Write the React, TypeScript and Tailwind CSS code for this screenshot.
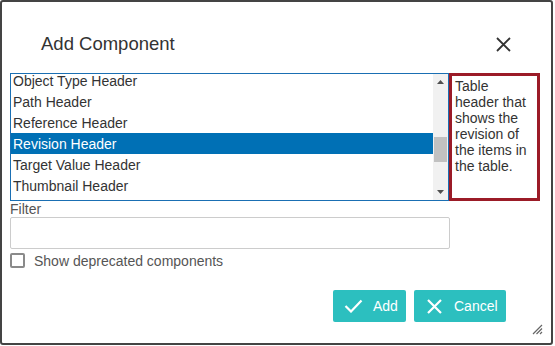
import React from "react";

const items = [
  "Object Type Header",
  "Path Header",
  "Reference Header",
  "Revision Header",
  "Target Value Header",
  "Thumbnail Header",
];

export default function App() {
  return (
    <div className="w-[555px] h-[346px] bg-white" style={{ fontFamily: '"Liberation Sans", Arial, sans-serif' }}>
      <div className="relative w-[553px] h-[345px] border-2 border-[#444444] rounded-[3px] bg-white flex flex-col">
        {/* Header */}
        <div className="flex items-center justify-between h-[30px] mt-[27px] mb-[14px] pl-[39px] pr-[40px]">
          <div className="text-[18.5px] text-[#333333] leading-none">Add Component</div>
          <svg width="15" height="15" viewBox="0 0 15 15">
            <path d="M1 1 L14 14 M14 1 L1 14" stroke="#333333" strokeWidth="1.8" fill="none" />
          </svg>
        </div>

        {/* Body */}
        <div className="px-[8px] flex flex-col">
          <div className="flex">
            <div className="w-[439px] h-[128px] border border-[#1a6fb3] flex">
              <div className="flex-1 overflow-hidden">
                <div className="-mt-[4px]">
                  {items.map((it) => (
                    <div
                      key={it}
                      className={
                        "h-[21px] leading-[20px] pt-[1px] pl-[2px] text-[14px] whitespace-nowrap " +
                        (it === "Revision Header" ? "bg-[#0070b5] text-white" : "text-[#333333]")
                      }
                    >
                      {it}
                    </div>
                  ))}
                </div>
              </div>
              <div className="w-[15px] h-full bg-[#f1f1f1] flex flex-col">
                <div className="h-[16px] flex items-center justify-center">
                  <svg width="7" height="4" viewBox="0 0 7 4">
                    <path d="M0 4 L3.5 0 L7 4 Z" fill="#505050" />
                  </svg>
                </div>
                <div className="flex-1 px-[1px]">
                  <div className="mt-[47px] h-[25px] bg-[#c1c1c1]" />
                </div>
                <div className="h-[16px] flex items-center justify-center">
                  <svg width="7" height="4" viewBox="0 0 7 4">
                    <path d="M0 0 L3.5 4 L7 0 Z" fill="#505050" />
                  </svg>
                </div>
              </div>
            </div>
            <div className="w-[91px] h-[128px] border-[3px] border-[#9b1b27] pl-[3px] pr-[2px] pt-[2px] text-[14px] leading-[16px] text-[#333333]">
              Table header that shows the revision of the items in the table.
            </div>
          </div>

          <div className="text-[14px] leading-[16px] text-[#555555]">Filter</div>
          <div className="w-[440px] h-[32px] border border-[#cccccc] rounded-[2px]" />

          <div className="flex items-center h-[17px] mt-[3px]">
            <div className="w-[15px] h-[15px] border-2 border-[#8a8a8a] rounded-[2px]" />
            <div className="ml-[9px] text-[14px] text-[#555555] leading-[16px]">Show deprecated components</div>
          </div>
        </div>

        {/* Buttons */}
        <div className="flex justify-end gap-[8px] pr-[45px] mt-[21px]">
          <div className="w-[73px] h-[32px] bg-[#2cbfbf] rounded-[2px] flex items-center pl-[11px] text-white text-[14px]">
            <svg width="19" height="14" viewBox="0 0 19 14">
              <path d="M1.5 7 L7 12.5 L17.5 1.5" stroke="white" strokeWidth="2.2" fill="none" />
            </svg>
            <span className="ml-[10px]">Add</span>
          </div>
          <div className="w-[92px] h-[32px] bg-[#2cbfbf] rounded-[2px] flex items-center pl-[13px] text-white text-[14px]">
            <svg width="15" height="15" viewBox="0 0 15 15">
              <path d="M1 1 L14 14 M14 1 L1 14" stroke="white" strokeWidth="2.2" fill="none" />
            </svg>
            <span className="ml-[12px]">Cancel</span>
          </div>
        </div>

        {/* Resize grip */}
        <svg className="absolute right-[8px] bottom-[8px]" width="11" height="11" viewBox="0 0 11 11">
          <path d="M1 10 L10 1 M4.5 10 L10 4.5 M8 10 L10 8" stroke="#666666" strokeWidth="1.2" fill="none" />
        </svg>
      </div>
    </div>
  );
}
